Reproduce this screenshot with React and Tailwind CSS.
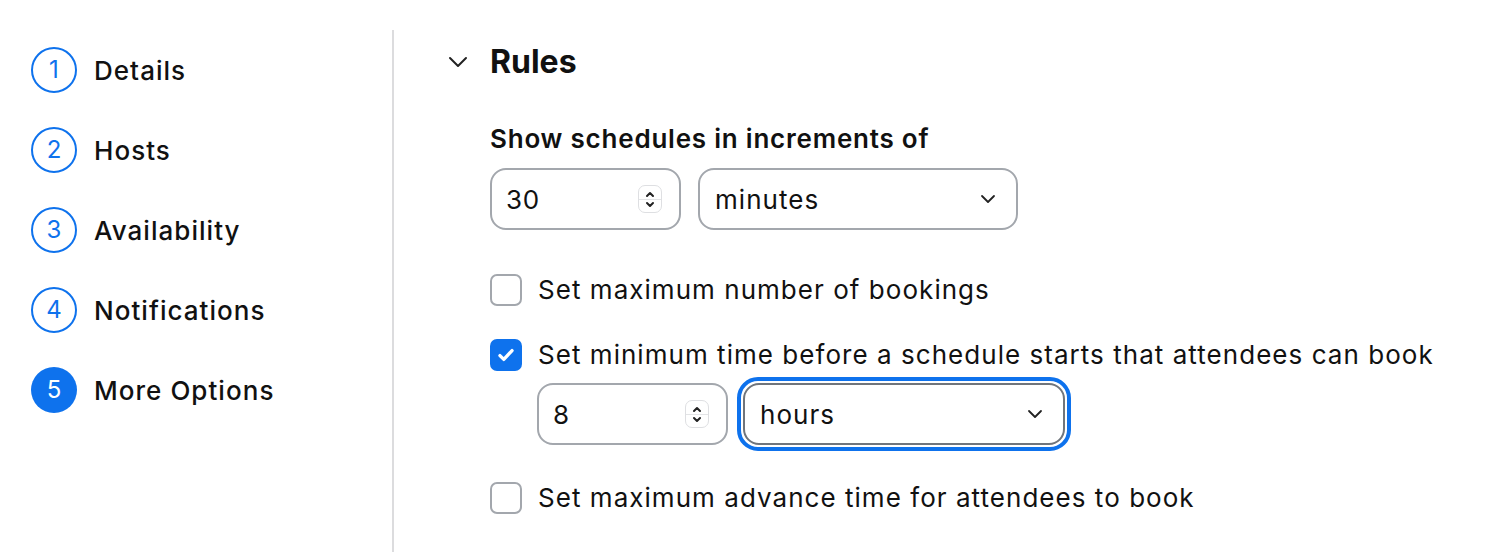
import React from 'react';

const steps = ['Details', 'Hosts', 'Availability', 'Notifications', 'More Options'];

function Spinner() {
    return (
        <div className="w-[24px] h-[28px] rounded-[7px] border border-[#dedfe2] flex flex-col items-center justify-center bg-white">
            <svg className="w-[12px] h-[10px]" viewBox="0 0 12 10" fill="none" stroke="#222" strokeWidth="2" strokeLinecap="round" strokeLinejoin="round">
                <path d="M3 7l3-3 3 3" />
            </svg>
            <div className="w-full h-px bg-[#e3e4e6]" />
            <svg className="w-[12px] h-[10px]" viewBox="0 0 12 10" fill="none" stroke="#222" strokeWidth="2" strokeLinecap="round" strokeLinejoin="round">
                <path d="M3 3l3 3 3-3" />
            </svg>
        </div>
    );
}

function NumberBox({ value }) {
    return (
        <div className="w-[191px] h-[62px] rounded-[16px] border-2 border-[#a3a7ad] flex items-center justify-between pl-[14px] pr-[17px] bg-white">
            <span className="text-[26px] tracking-[0.03em] text-[#111]">{value}</span>
            <Spinner />
        </div>
    );
}

function SelectBox({ value, focused }) {
    return (
        <div className={`rounded-[21px] ${focused ? 'border-[4px] border-[#0e72ed] p-[2px]' : ''}`}>
            <div className={`${focused ? 'w-[322px]' : 'w-[320px]'} h-[62px] rounded-[16px] border-2 ${focused ? 'border-[#70757c]' : 'border-[#a3a7ad]'} flex items-center justify-between pl-[15px] pr-[20px] bg-white`}>
                <span className="text-[26px] tracking-[0.04em] text-[#111]">{value}</span>
                <svg className="w-[16px] h-[10px]" viewBox="0 0 16 10" fill="none" stroke="#222" strokeWidth="1.8" strokeLinecap="round" strokeLinejoin="round">
                    <path d="M2 2l6 6 6-6" />
                </svg>
            </div>
        </div>
    );
}

function Checkbox({ checked, label }) {
    return (
        <div className="flex items-center gap-[16px]">
            {checked ? (
                <div className="w-[32px] h-[32px] rounded-[7px] bg-[#0e72ed] flex items-center justify-center">
                    <svg className="w-[22px] h-[22px]" viewBox="0 0 20 20" fill="none" stroke="white" strokeWidth="3" strokeLinecap="round" strokeLinejoin="round">
                        <path d="M4.5 10.5l3.5 3.5 7.5-8" />
                    </svg>
                </div>
            ) : (
                <div className="w-[32px] h-[32px] rounded-[7px] border-2 border-[#a3a7ad] bg-white" />
            )}
            <span className="text-[26px] tracking-[0.04em] text-[#111] leading-none">{label}</span>
        </div>
    );
}

export default function App() {
    return (
        <div className="w-[1506px] h-[552px] bg-white flex font-['Inter',sans-serif] overflow-hidden">
            {/* Steps sidebar */}
            <div className="w-[394px] shrink-0 pt-[17px] pl-[31px] flex flex-col gap-[34px] border-r-2 border-[#dcdcde] mt-[30px]">
                {steps.map((s, i) => {
                    const active = i === steps.length - 1;
                    return (
                        <div key={s} className="flex items-center gap-[17px]">
                            <div className={`w-[46px] h-[46px] rounded-full flex items-center justify-center text-[24px] ${active ? 'bg-[#0e72ed] text-white' : 'border-2 border-[#0e72ed] text-[#0e72ed]'}`}>
                                {i + 1}
                            </div>
                            <span className="text-[26px] font-medium tracking-[0.04em] text-[#111]">{s}</span>
                        </div>
                    );
                })}
            </div>

            {/* Main */}
            <div className="flex-1 pl-[54px] pt-[40px]">
                <div className="flex items-center gap-[22px] h-[44px]">
                    <svg className="w-[20px] h-[12px]" viewBox="0 0 20 12" fill="none" stroke="#222" strokeWidth="2" strokeLinecap="round" strokeLinejoin="round">
                        <path d="M2 2l8 8 8-8" />
                    </svg>
                    <h2 className="text-[32px] font-bold text-[#111]">Rules</h2>
                </div>

                <div className="pl-[42px]">
                    <div className="mt-[40px] text-[26px] font-semibold tracking-[0.03em] text-[#111] leading-[30px]">Show schedules in increments of</div>
                    <div className="mt-[14px] flex items-center gap-[17px]">
                        <NumberBox value="30" />
                        <SelectBox value="minutes" />
                    </div>

                    <div className="mt-[44px]">
                        <Checkbox label="Set maximum number of bookings" />
                    </div>
                    <div className="mt-[33px]">
                        <Checkbox checked label="Set minimum time before a schedule starts that attendees can book" />
                    </div>
                    <div className="mt-[6px] pl-[47px] flex items-center gap-[9px]">
                        <NumberBox value="8" />
                        <SelectBox value="hours" focused />
                    </div>
                    <div className="mt-[31px]">
                        <Checkbox label="Set maximum advance time for attendees to book" />
                    </div>
                </div>
            </div>
        </div>
    );
}
